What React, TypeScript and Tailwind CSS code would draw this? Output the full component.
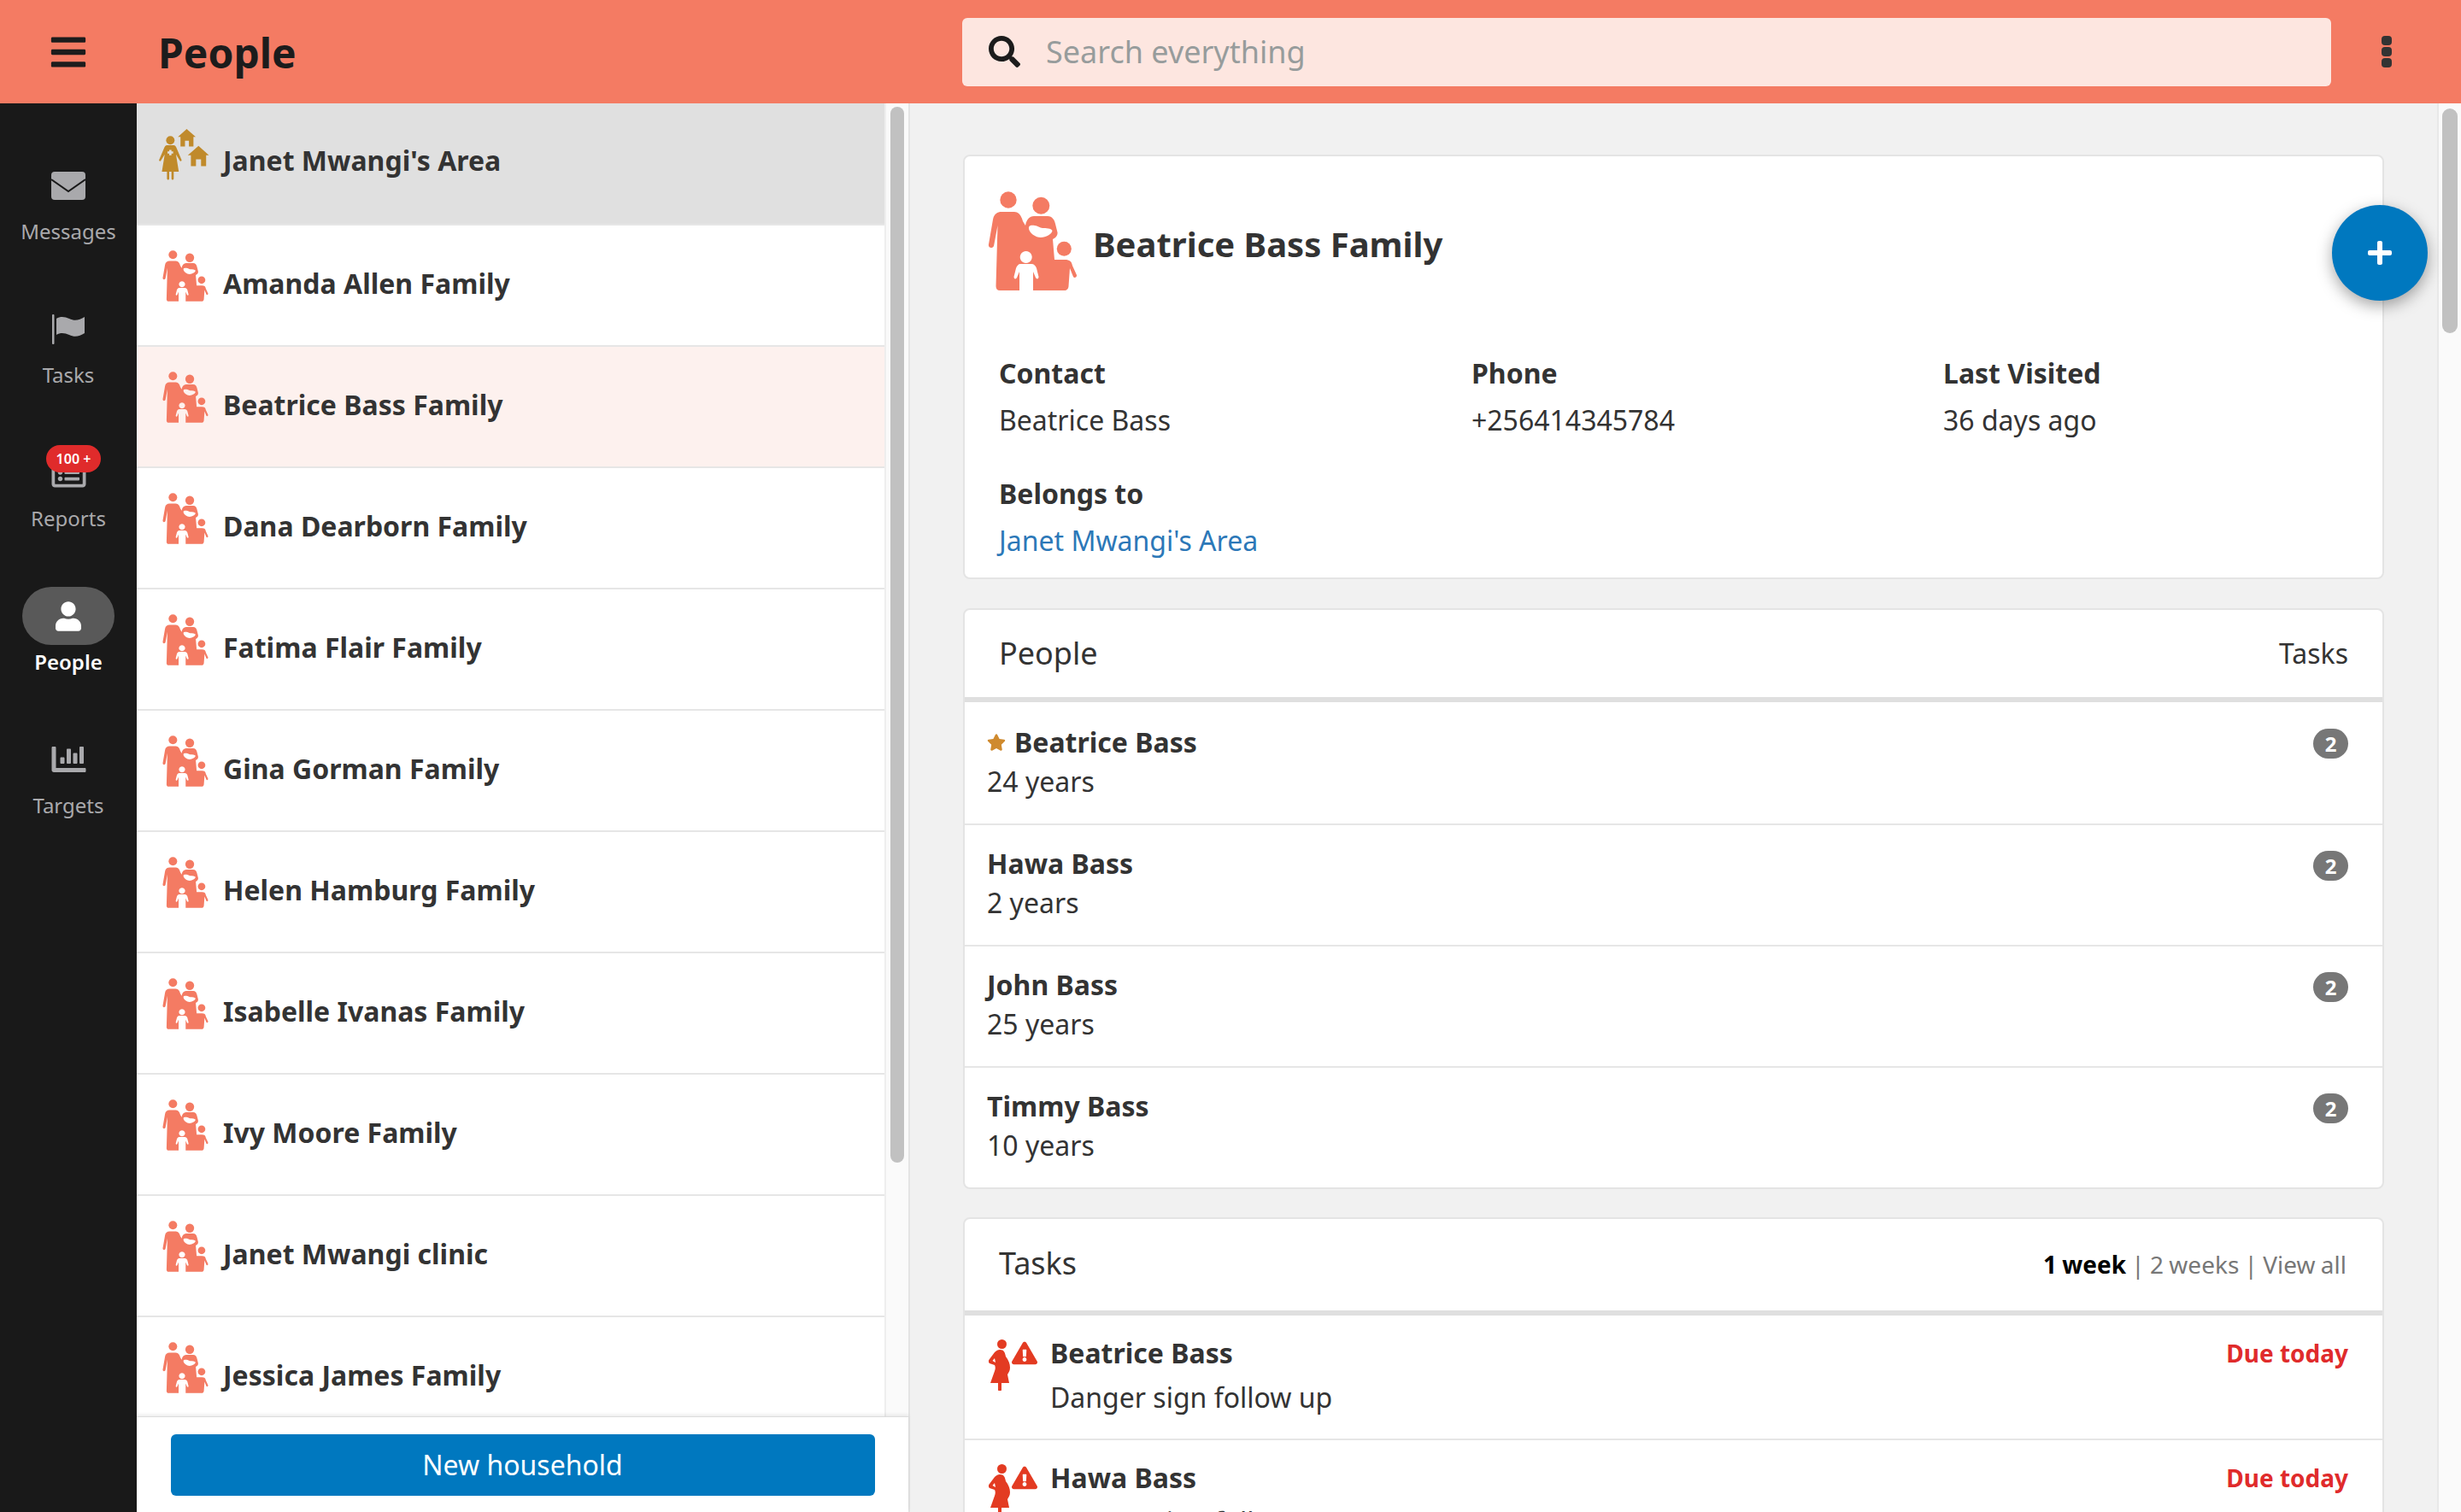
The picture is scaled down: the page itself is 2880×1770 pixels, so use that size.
import { FaBars, FaChartBar, FaExclamationTriangle, FaPlus, FaRegListAlt, FaSearch, FaStar, FaUser } from "react-icons/fa";

const font = { fontFamily: '"Noto Sans", sans-serif' };

function Family({ className }: { className: string }) {
  return (
    <svg viewBox="0 0 105 116" className={className} fill="#f47b63">
      <circle cx="24" cy="10" r="9.7" />
      <circle cx="62.3" cy="16.7" r="10" />
      <circle cx="89.3" cy="67.3" r="8.5" />
      <path
        fillRule="evenodd"
        d="M16 24H31C36 24 39 28 41 35L44 40C45 33 49 29 54 29H70C75 29 78 33 79 38L81.5 48C82 52 79 55 76 56L78 80H90C96 80 98 82 99 87L104 98C104.5 101 101 102 100 100L96 90L94.5 111C94.5 114 92 116 90 116H14C11 116 9.5 114 9.5 111L11.5 40L7 64C6 67 0 67 1 62L6 33C7 27 11 24 16 24ZM48 42C49 39 53 40 55 40C58 40 61 43 64 43C68 43 74 43 75.5 46C75 50 68 54 62 54C56 54 47 48 48 42ZM44.7 70A7 7 0 1 0 44.71 70ZM38 85H51C54 85 56 87 57 90L59.5 100C59.5 103 57 103 56 101L53 94V116H37V94L34 101C33 103 30.5 103 30.5 100L33 90C34 87 36 85 38 85Z"
      />
    </svg>
  );
}

function Area() {
  return (
    <svg viewBox="0 0 178 182" className="h-[60px] w-[59px] shrink-0" fill="#c08a2b">
      <circle cx="40" cy="40" r="15" />
      <path
        fillRule="evenodd"
        d="M28 58H52C57 58 60 62 63 70L80 110C81 114 76 116 74 113L60 90L70 152H52V176C52 182 44 182 44 176V152H36V176C36 182 28 182 28 176V152H10L20 90L6 113C4 116 -1 114 0 110L17 70C20 62 23 58 28 58ZM36 74H44V80H50V87H44V93H36V87H30V80H36Z"
      />
      <path d="M98 0L130 28H122V62H106V42H92V62H76V28H67Z" />
      <path d="M140 60L177 93H167V132H149V108H131V132H113V93H102Z" />
    </svg>
  );
}

function Pregnant() {
  return (
    <svg viewBox="0 0 25 60" className="h-[60px] w-[25px]" fill="#e33b22">
      <circle cx="15.5" cy="5.5" r="5.5" />
      <path d="M13 12C18 12 19 15 20 20C23 24 25 28 25 33C25 37 23 39 22 41L24 51H15V59C15 61 11 61 11 59V51H2L7 37C8 34 8 32 7 30L1 28C-1 26 0 24 1 23L7 15C9 13 11 12 13 12ZM7 22L4.5 25L8 27Z" fillRule="evenodd" />
    </svg>
  );
}

function Envelope() {
  return (
    <svg viewBox="0 0 40 33" className="h-[33px] w-[40px]">
      <rect x="0" y="0" width="40" height="33" rx="4" fill="#a9a9ac" />
      <path d="M0 9L20 23L40 9" fill="none" stroke="#191919" strokeWidth="2" />
    </svg>
  );
}

function Flag() {
  return (
    <svg viewBox="0 0 38 35" className="h-[35px] w-[38px]" fill="#a9a9ac">
      <rect x="0" y="0" width="2.5" height="35" rx="1" />
      <path d="M5 5C10 2 15 3 20 5C26 8 32 7 38 3V22C32 26 26 27 20 24C15 22 10 21 5 24Z" />
    </svg>
  );
}

function Dots() {
  return (
    <div className="flex w-[12px] flex-col gap-[1.5px]">
      <div className="h-[11.5px] rounded-[4px] bg-[#333333]" />
      <div className="h-[11.5px] rounded-[4px] bg-[#333333]" />
      <div className="h-[11.5px] rounded-[4px] bg-[#333333]" />
    </div>
  );
}

const nav = [
  { label: "Messages", icon: <Envelope /> },
  { label: "Tasks", icon: <Flag /> },
  { label: "Reports", icon: <FaRegListAlt className="h-[40px] w-[41px]" />, badge: "100 +" },
  { label: "People", icon: <FaUser className="h-[35px] w-[30px]" />, active: true },
  { label: "Targets", icon: <FaChartBar className="h-[40px] w-[41px]" /> },
];

const households = [
  "Amanda Allen Family",
  "Beatrice Bass Family",
  "Dana Dearborn Family",
  "Fatima Flair Family",
  "Gina Gorman Family",
  "Helen Hamburg Family",
  "Isabelle Ivanas Family",
  "Ivy Moore Family",
  "Janet Mwangi clinic",
  "Jessica James Family",
];

const people = [
  { name: "Beatrice Bass", age: "24 years", star: true },
  { name: "Hawa Bass", age: "2 years" },
  { name: "John Bass", age: "25 years" },
  { name: "Timmy Bass", age: "10 years" },
];

const tasks = [
  { name: "Beatrice Bass", note: "Danger sign follow up" },
  { name: "Hawa Bass", note: "Danger sign follow up" },
];

export default function App() {
  return (
    <div style={font} className="flex h-[1770px] w-[2880px] flex-col overflow-hidden bg-[#f1f1f1] text-[#333333]">
      <header className="flex h-[121px] shrink-0 items-center bg-[#f47b63]">
        <div className="flex w-[160px] shrink-0 justify-center">
          <FaBars className="h-[46px] w-[42px] text-[#1c1c1c]" />
        </div>
        <h1 className="mt-[2px] w-[966px] shrink-0 pl-[25px] text-[48px] font-bold text-[#1c1c1c]">People</h1>
        <div className="flex h-[80px] w-[1602px] shrink-0 items-center gap-[30px] rounded-[6px] bg-[#fde6e0] pl-[31px] text-[36px] text-[#979c9c]">
          <FaSearch className="h-[37px] w-[37px] text-[#1c1c1c]" />
          <span>Search everything</span>
        </div>
        <div className="flex flex-1 justify-center pr-[22px]">
          <Dots />
        </div>
      </header>

      <div className="flex min-h-0 flex-1">
        <nav className="flex w-[160px] shrink-0 flex-col items-center bg-[#191919] pt-[62px] text-[24px] text-[#a9a9ac]">
          {nav.map((n) => (
            <div key={n.label} className="relative flex h-[168px] w-full flex-col items-center">
              <div className={`flex h-[68px] w-[108px] items-center justify-center rounded-full ${n.active ? "bg-[#595959] text-white" : ""}`}>
                {n.icon}
              </div>
              <span className={`leading-[40px] ${n.active ? "font-semibold text-white" : ""}`}>{n.label}</span>
              {n.badge && (
                <span className="absolute left-[54px] top-[2px] flex h-[32px] w-[64px] items-center justify-center rounded-full bg-[#e02b2b] text-[16px] font-semibold text-white">
                  {n.badge}
                </span>
              )}
            </div>
          ))}
        </nav>

        <aside className="flex w-[905px] shrink-0 flex-col border-r-2 border-[#e4e4e4] bg-white">
          <div className="flex min-h-0 flex-1">
            <ul className="min-w-0 flex-1 overflow-hidden text-[32px] font-bold">
              <li className="flex h-[141px] items-start gap-[16px] bg-[#e0e0e0] pl-[26px] pt-[30px]">
                <Area />
                <span className="mt-[13px]">Janet Mwangi's Area</span>
              </li>
              {households.map((h, i) => (
                <li key={h} className={`flex h-[142px] items-start gap-[17px] border-t-2 border-[#e6e6e6] pl-[30px] pt-[29px] ${i === 1 ? "bg-[#fdf1ee]" : ""}`}>
                  <Family className="h-[60px] w-[54px] shrink-0" />
                  <span className="mt-[15px]">{h}</span>
                </li>
              ))}
            </ul>
            <div className="w-[28px] shrink-0 border-l-2 border-[#eeeeee] bg-[#fafafa] px-[5px] pt-[4px]">
              <div className="h-[1236px] rounded-full bg-[#c1c1c1]" />
            </div>
          </div>
          <div className="relative flex h-[112px] shrink-0 items-start justify-center border-t border-[#dddddd] bg-white pt-[20px] shadow-[0_-2px_4px_rgba(0,0,0,0.08)]">
            <button className="h-[72px] w-[824px] rounded-[6px] bg-[#0078bf] text-[32px] text-white">New household</button>
          </div>
        </aside>

        <main className="relative min-w-0 flex-1 overflow-hidden">
          <div className="flex h-full">
            <div className="flex min-w-0 flex-1 flex-col px-[62px] pt-[60px]">
              <section className="relative h-[497px] shrink-0 rounded-[8px] border-2 border-[#e4e4e4] bg-white pl-[27px] pt-[41px]">
                <div className="flex items-center gap-[18px]">
                  <Family className="h-[116px] w-[105px] shrink-0" />
                  <h2 className="pt-[8px] text-[40px] font-bold">Beatrice Bass Family</h2>
                </div>
                <div className="mt-[69px] grid grid-cols-[553px_552px_auto] pl-[13px] text-[32px] leading-[55px]">
                  <div><b>Contact</b><div>Beatrice Bass</div></div>
                  <div><b>Phone</b><div>+256414345784</div></div>
                  <div><b>Last Visited</b><div>36 days ago</div></div>
                  <div className="col-span-3 mt-[31px]"><b>Belongs to</b><div className="text-[#2c78b8]">Janet Mwangi's Area</div></div>
                </div>
                <div className="absolute right-[-53px] top-[57px] flex h-[112px] w-[112px] items-center justify-center rounded-full bg-[#0078bf] shadow-[0_6px_18px_rgba(0,0,0,0.35)]">
                  <FaPlus className="h-[32px] w-[32px] text-white" />
                </div>
              </section>

              <section className="mt-[34px] h-[680px] shrink-0 rounded-[8px] border-2 border-[#e4e4e4] bg-white">
                <div className="flex h-[108px] items-center justify-between border-b-[6px] border-[#dfdfdf] pl-[40px] pr-[40px]">
                  <span className="text-[36px]">People</span>
                  <span className="text-[32px]">Tasks</span>
                </div>
                {people.map((p, i) => (
                  <div key={p.name} className={`flex h-[142px] items-start justify-between pl-[26px] pr-[40px] ${i ? "border-t-2 border-[#e6e6e6] pt-[22px]" : "pt-[24px]"}`}>
                    <div className="text-[32px] leading-[46px]">
                      <div className="flex items-center gap-[10px] font-bold">
                        {p.star && <FaStar className="h-[22px] w-[22px] text-[#cf8a2e]" />}
                        {p.name}
                      </div>
                      <div>{p.age}</div>
                    </div>
                    <span className={`flex h-[35px] w-[41px] items-center justify-center rounded-full bg-[#777777] text-[24px] font-bold text-white ${i ? "mt-[8px]" : "mt-[7px]"}`}>2</span>
                  </div>
                ))}
              </section>

              <section className="mt-[33px] shrink-0 rounded-[8px] border-2 border-[#e4e4e4] bg-white">
                <div className="flex h-[113px] items-center justify-between border-b-[6px] border-[#dfdfdf] pb-[3px] pl-[40px] pr-[42px]">
                  <span className="text-[36px]">Tasks</span>
                  <span className="mt-[2px] text-[28px] text-[#777777] [word-spacing:-1px]"><b className="text-black">1 week</b> | 2 weeks | View all</span>
                </div>
                {tasks.map((t, i) => (
                  <div key={i} className={`flex h-[144px] items-start justify-between pl-[28px] pr-[40px] pt-[28px] ${i ? "border-t-2 border-[#e6e6e6]" : ""}`}>
                    <div className="flex">
                      <Pregnant />
                      <FaExclamationTriangle className="ml-[2px] mt-[2px] h-[28px] w-[30px] text-[#e33b22]" />
                      <div className="ml-[15px] mt-[-10px] text-[32px] leading-[52px]">
                        <div className="font-bold">{t.name}</div>
                        <div>{t.note}</div>
                      </div>
                    </div>
                    <span className="mt-[-5px] text-[28px] font-bold text-[#e02b2b]">Due today</span>
                  </div>
                ))}
              </section>
            </div>
            <div className="w-[28px] shrink-0 border-l-2 border-[#e8e8e8] bg-[#fafafa] pl-[4px] pr-[4px] pt-[6px]">
              <div className="h-[263px] rounded-full bg-[#c1c1c1]" />
            </div>
          </div>
        </main>
      </div>
    </div>
  );
}
